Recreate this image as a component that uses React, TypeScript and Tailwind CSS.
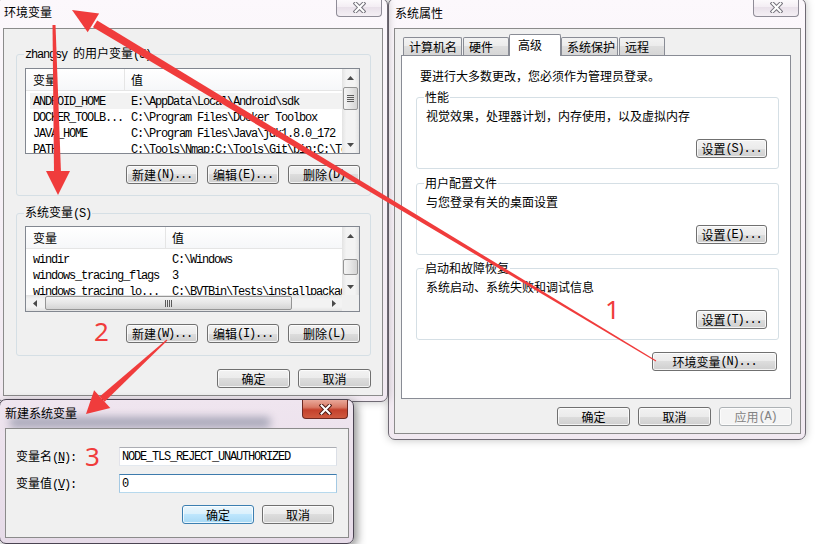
import React from 'react'

type Row = [string, string]

const ASCII = /^[\x20-\x7e]+$/

// SimSun-like mix: CJK at 12px, ASCII in a 6px-wide mono
function T({ s }: { s: string }) {
  const parts = s.split(/([\x20-\x7e]+)/).filter((p) => p !== '')
  return (
    <>
      {parts.map((p, i) =>
        ASCII.test(p) ? (
          <span key={i} className="whitespace-pre font-['Liberation_Mono',monospace] tracking-[-1.2px]">
            {p}
          </span>
        ) : (
          <span key={i}>{p}</span>
        ),
      )}
    </>
  )
}

function Btn({ label, w, kind = 'normal' }: { label: string; w: string; kind?: 'normal' | 'default' | 'disabled' }) {
  const look =
    kind === 'default'
      ? 'border-[#3c7fb1] bg-[linear-gradient(#eaf6fd,#d9f0fc_50%,#bee6fd_50%,#a7d9f5)] text-black'
      : kind === 'disabled'
        ? 'border-[#adb2b5] bg-[#f4f4f4] text-[#838383]'
        : 'border-[#707070] bg-[linear-gradient(#f2f2f2,#ebebeb_50%,#dddddd_50%,#cfcfcf)] text-black'
  return (
    <button
      type="button"
      className={`flex h-[19px] shrink-0 items-center justify-center rounded-[3px] border text-[12px] leading-[14px] shadow-[inset_0_0_0_1px_rgba(255,255,255,0.75)] ${w} ${look}`}
    >
      <T s={label} />
    </button>
  )
}

function CloseBtn({ active, h }: { active?: boolean; h: string }) {
  return (
    <div
      className={`flex w-[46px] shrink-0 items-center justify-center rounded-b-[4px] border border-t-0 ${h} ${
        active
          ? 'border-[#6d2a23] bg-[linear-gradient(#e9a899,#d97a66_40%,#c4412c_55%,#cf5a40)]'
          : 'border-[#8f8c97] bg-[linear-gradient(#fdfbfd,#f3edf3_50%,#e9e1ea_50%,#f4eff4)]'
      }`}
    >
      <svg width="13" height="11" viewBox="0 0 13 11">
        <path d="M2.5 1.5 L10.5 9.5 M10.5 1.5 L2.5 9.5" stroke={active ? '#4e1a14' : '#75737c'} strokeWidth="4" strokeLinecap="square" />
        <path d="M2.5 1.5 L10.5 9.5 M10.5 1.5 L2.5 9.5" stroke="#ffffff" strokeWidth="2" strokeLinecap="square" />
      </svg>
    </div>
  )
}

function Win({
  box,
  bar,
  tp,
  cb,
  title,
  active,
  children,
}: {
  box: string
  bar: string
  tp: string
  cb: string
  title: string
  active?: boolean
  children: React.ReactNode
}) {
  return (
    <div
      className={`absolute flex flex-col rounded-[7px] border ${
        active
          ? 'border-[#4b4452] bg-[linear-gradient(#efe5ef,#e6dbe8)] shadow-[3px_3px_10px_rgba(0,0,0,0.45)]'
          : 'border-[#6f6a74] bg-[linear-gradient(#fcf8fc,#f1e9f1)] shadow-[0_0_8px_rgba(0,0,0,0.25)]'
      } ${box}`}
    >
      <div className={`relative flex shrink-0 items-start justify-between ${bar}`}>
        {active && <div className="absolute left-[10px] top-[17px] h-[11px] w-[260px] bg-[#3c4a66] opacity-40 blur-[4px]" />}
        <div className={`relative text-[12px] leading-[14px] text-black ${tp}`}>{title}</div>
        <CloseBtn active={active} h={cb} />
      </div>
      <div className="relative mb-[5px] ml-[5px] mr-[4px] flex-1 border border-[#8b8b8b] bg-[#f0f0f0]">{children}</div>
    </div>
  )
}

function Group({ legend, cls, children }: { legend: string; cls: string; children: React.ReactNode }) {
  return (
    <fieldset className={`rounded-[3px] border border-[#d5dfe5] ${cls}`}>
      <legend className="-ml-[1px] px-[1px] text-[12px] leading-[14px]">
        <T s={legend} />
      </legend>
      {children}
    </fieldset>
  )
}

function Up() {
  return (
    <svg width="7" height="4" viewBox="0 0 7 4">
      <path d="M0 4 L3.5 0 L7 4Z" fill="#4a4a4a" />
    </svg>
  )
}

function Down() {
  return (
    <svg width="7" height="4" viewBox="0 0 7 4">
      <path d="M0 0 L3.5 4 L7 0Z" fill="#4a4a4a" />
    </svg>
  )
}

function VScroll({ thumb, grip }: { thumb: string; grip?: boolean }) {
  return (
    <div className="flex w-[17px] shrink-0 flex-col bg-[linear-gradient(90deg,#e3e3e3,#f3f3f3_25%,#f3f3f3_75%,#e3e3e3)]">
      <div className="flex h-[17px] shrink-0 items-center justify-center">
        <Up />
      </div>
      <div className="min-h-0 flex-1">
        <div
          className={`mx-[1px] flex flex-col items-center justify-center gap-[1px] rounded-[2px] border border-[#959595] bg-[linear-gradient(90deg,#f4f4f4,#e6e6e6_50%,#d4d4d4)] ${thumb}`}
        >
          {grip && (
            <>
              <div className="h-[1px] w-[7px] bg-[#5a5a5a]" />
              <div className="h-[1px] w-[7px] bg-[#5a5a5a]" />
              <div className="h-[1px] w-[7px] bg-[#5a5a5a]" />
              <div className="h-[1px] w-[7px] bg-[#5a5a5a]" />
            </>
          )}
        </div>
      </div>
      <div className="flex h-[17px] shrink-0 items-center justify-center">
        <Down />
      </div>
    </div>
  )
}

function HScroll() {
  return (
    <div className="flex h-[16px] shrink-0">
      <div className="flex flex-1 bg-[linear-gradient(#e3e3e3,#f3f3f3_25%,#f3f3f3_75%,#e3e3e3)]">
        <div className="flex w-[17px] items-center justify-center">
          <svg width="4" height="7" viewBox="0 0 4 7">
            <path d="M4 0 L0 3.5 L4 7Z" fill="#4a4a4a" />
          </svg>
        </div>
        <div className="flex-1 py-[1px]">
          <div className="ml-[2px] flex h-full w-[247px] items-center justify-center gap-[1px] rounded-[2px] border border-[#959595] bg-[linear-gradient(#f4f4f4,#e6e6e6_50%,#d4d4d4)]">
            <div className="h-[7px] w-[1px] bg-[#5a5a5a]" />
            <div className="h-[7px] w-[1px] bg-[#5a5a5a]" />
            <div className="h-[7px] w-[1px] bg-[#5a5a5a]" />
            <div className="h-[7px] w-[1px] bg-[#5a5a5a]" />
          </div>
        </div>
        <div className="flex w-[17px] items-center justify-center">
          <svg width="4" height="7" viewBox="0 0 4 7">
            <path d="M0 0 L4 3.5 L0 7Z" fill="#4a4a4a" />
          </svg>
        </div>
      </div>
      <div className="w-[17px] bg-[#f0f0f0]" />
    </div>
  )
}

function ListView({
  headW,
  cellW,
  rows,
  hs,
  thumb,
  grip,
  hot,
}: {
  headW: string
  cellW: string
  rows: Row[]
  hs?: boolean
  thumb: string
  grip?: boolean
  hot?: boolean
}) {
  return (
    <div className="flex h-[86px] w-[335px] flex-col border border-[#828790] bg-white">
      <div className="flex min-h-0 flex-1">
        <div className="min-w-0 flex-1 overflow-hidden">
          <div className="flex h-[22px] border-b border-[#e5e5e5] bg-[linear-gradient(#ffffff,#f6f7f9)] text-[12px] leading-[21px]">
            <div className={`shrink-0 border-r border-[#e5e5e5] pl-[7px] ${headW}`}>变量</div>
            <div className="pl-[6px]">值</div>
          </div>
          <div className="pt-[2px]">
            {rows.map(([a, b], i) => (
              <div
                key={i}
                className={`ml-[4px] flex h-[16px] items-center whitespace-nowrap text-[12px] leading-[16px] ${
                  hot && i === 0 ? 'bg-[#f2f2f2]' : ''
                }`}
              >
                <div className={`shrink-0 overflow-hidden pl-[3px] ${cellW}`}>
                  <T s={a} />
                </div>
                <div className="min-w-0 flex-1 overflow-hidden pl-[6px]">
                  <T s={b} />
                </div>
              </div>
            ))}
          </div>
        </div>
        <VScroll thumb={thumb} grip={grip} />
      </div>
      {hs && <HScroll />}
    </div>
  )
}

function PGroup({ mt, legend, text, btn }: { mt: string; legend: string; text: string; btn: string }) {
  return (
    <Group legend={legend} cls={`pl-[8px] pr-[11px] pt-[5px] pb-[10px] ${mt}`}>
      <div className="pl-[1px] leading-[14px]">{text}</div>
      <div className="mt-[16px] flex justify-end">
        <Btn w="w-[71px]" label={btn} />
      </div>
    </Group>
  )
}

function Tab({ label, w, sel }: { label: string; w: string; sel?: boolean }) {
  return sel ? (
    <div
      className={`relative z-10 -mb-[1px] flex h-[22px] shrink-0 items-center rounded-t-[2px] border border-b-0 border-[#898c95] bg-white pb-[2px] pl-[8px] ${w}`}
    >
      {label}
    </div>
  ) : (
    <div
      className={`flex h-[18px] shrink-0 items-center rounded-t-[2px] border border-b-0 border-[#898c95] bg-[linear-gradient(#f3f3f3,#ebebeb_50%,#dedede_50%,#d6d6d6)] pl-[5px] ${w}`}
    >
      {label}
    </div>
  )
}

const userRows: Row[] = [
  ['ANDROID_HOME', 'E:\\AppData\\Local\\Android\\sdk'],
  ['DOCKER_TOOLB...', 'C:\\Program Files\\Docker Toolbox'],
  ['JAVA_HOME', 'C:\\Program Files\\Java\\jdk1.8.0_172'],
  ['PATH', 'C:\\Tools\\Nmap;C:\\Tools\\Git\\bin;C:\\Tools'],
]

const sysRows: Row[] = [
  ['windir', 'C:\\Windows'],
  ['windows_tracing_flags', '3'],
  ['windows_tracing_lo...', 'C:\\BVTBin\\Tests\\installpackage'],
]

export default function App() {
  return (
    <div className="relative h-[544px] w-[817px] overflow-hidden bg-white font-['Noto_Sans_CJK_SC',sans-serif] text-[12px] leading-[14px] text-black">
      {/* 系统属性 */}
      <Win box="left-[388px] top-[-2px] h-[442px] w-[418px]" bar="h-[29px] pl-[6px] pr-[6px]" tp="pt-[7px]" cb="h-[18px]" title="系统属性">
        <div className="flex h-full flex-col">
          <div className="ml-[6px] mr-[9px] mt-[5px] flex flex-col">
            <div className="flex h-[21px] items-end pl-[2px]">
              <Tab w="w-[59px]" label="计算机名" />
              <Tab w="ml-[1px] w-[46px]" label="硬件" />
              <Tab sel w="w-[52px]" label="高级" />
              <Tab w="w-[57px]" label="系统保护" />
              <Tab w="ml-[1px] w-[46px]" label="远程" />
            </div>
            <div className="h-[344px] border border-[#898c95] bg-white">
              <div className="pl-[18px] pt-[13px]">要进行大多数更改，您必须作为管理员登录。</div>
              <div className="ml-[14px] flex w-[363px] flex-col">
                <PGroup mt="mt-[7px]" legend="性能" text="视觉效果，处理器计划，内存使用，以及虚拟内存" btn="设置(S)..." />
                <PGroup mt="mt-[7px]" legend="用户配置文件" text="与您登录有关的桌面设置" btn="设置(E)..." />
                <PGroup mt="mt-[6px]" legend="启动和故障恢复" text="系统启动、系统失败和调试信息" btn="设置(T)..." />
              </div>
              <div className="mt-[12px] flex justify-end pr-[13px]">
                <Btn w="w-[125px]" label="环境变量(N)..." />
              </div>
            </div>
          </div>
          <div className="mt-[8px] flex justify-end gap-[8px] pr-[8px]">
            <Btn w="w-[73px]" label="确定" />
            <Btn w="w-[73px]" label="取消" />
            <Btn w="w-[73px]" label="应用(A)" kind="disabled" />
          </div>
        </div>
      </Win>

      {/* 环境变量 */}
      <Win box="left-[-3px] top-[-2px] h-[404px] w-[391px]" bar="h-[29px] pl-[6px] pr-[5px]" tp="pt-[6px]" cb="h-[18px]" title="环境变量">
        <div className="flex flex-col pl-[12px] pt-[17px]">
          <Group legend="zhangsy 的用户变量(U)" cls="w-[355px] pl-[8px] pr-[10px] pt-[6px] pb-[11px]">
            <ListView headW="w-[99px]" cellW="w-[95px]" rows={userRows} thumb="mt-[1px] h-[23px]" grip hot />
            <div className="mt-[11px] flex justify-end gap-[9px]">
              <Btn w="w-[72px]" label="新建(N)..." />
              <Btn w="w-[72px]" label="编辑(E)..." />
              <Btn w="w-[72px]" label="删除(D)" />
            </div>
          </Group>
          <Group legend="系统变量(S)" cls="mt-[9px] w-[355px] pl-[8px] pr-[10px] pt-[5px] pb-[12px]">
            <ListView headW="w-[140px]" cellW="w-[136px]" rows={sysRows} thumb="mt-[15px] h-[16px]" hs />
            <div className="mt-[12px] flex justify-end gap-[9px]">
              <Btn w="w-[72px]" label="新建(W)..." />
              <Btn w="w-[72px]" label="编辑(I)..." />
              <Btn w="w-[72px]" label="删除(L)" />
            </div>
          </Group>
          <div className="mt-[13px] flex w-[355px] justify-end gap-[8px]">
            <Btn w="w-[73px]" label="确定" />
            <Btn w="w-[73px]" label="取消" />
          </div>
        </div>
      </Win>

      {/* 新建系统变量 */}
      <Win box="left-[-1px] top-[399px] h-[145px] w-[355px]" bar="h-[28px] pl-[5px] pr-[5px]" tp="pt-[6px]" cb="h-[19px]" title="新建系统变量" active>
        <div className="flex flex-col pl-[10px] pr-[11px] pt-[18px]">
          <div className="flex h-[19px] items-center">
            <div className="w-[103px] shrink-0">
              变量名
              <span className="whitespace-pre font-['Liberation_Mono',monospace] tracking-[-1.2px]">
                (<span className="underline">N</span>):
              </span>
            </div>
            <div className="flex h-[19px] w-[218px] items-center border border-[#abadb3] border-b-[#e3e9ef] border-l-[#e2e3ea] border-r-[#dbdfe6] bg-white pl-[2px]">
              <T s="NODE_TLS_REJECT_UNAUTHORIZED" />
            </div>
          </div>
          <div className="mt-[8px] flex h-[19px] items-center">
            <div className="w-[103px] shrink-0">
              变量值
              <span className="whitespace-pre font-['Liberation_Mono',monospace] tracking-[-1.2px]">
                (<span className="underline">V</span>):
              </span>
            </div>
            <div className="flex h-[19px] w-[218px] items-center border border-[#3d7bad] border-b-[#b7d9ed] border-l-[#a4c9e3] border-r-[#a4c9e3] bg-white pl-[2px]">
              <T s="0" />
            </div>
          </div>
          <div className="mt-[12px] flex justify-end gap-[8px] pr-[3px]">
            <Btn w="w-[72px]" label="确定" kind="default" />
            <Btn w="w-[72px]" label="取消" />
          </div>
        </div>
      </Win>

      {/* red annotations */}
      <svg className="pointer-events-none absolute left-0 top-0" width="817" height="544" viewBox="0 0 817 544">
        <g fill="#f03c3c">
          <polygon points="656.3,360.5 97.2,20.5 93.0,27.3 655.7,361.5" />
          <polygon points="72,10 99.1,13.5 87.7,32.3" />
          <polygon points="52.5,25 55.5,25 61,173 54,173" />
          <polygon points="58,195 70,171 46,171" />
          <polygon points="166.6,339.6 167.4,340.4 104.6,401.8 99.8,396.6" />
          <polygon points="86,414 110.3,408.1 94.1,390.3" />
        </g>
      </svg>
      <div className="absolute left-[605px] top-[296px] font-['Noto_Sans',sans-serif] text-[26px] leading-[26px] text-[#f03c3c]">1</div>
      <div className="absolute left-[94px] top-[318px] font-['Noto_Sans',sans-serif] text-[26px] leading-[26px] text-[#f03c3c]">2</div>
      <div className="absolute left-[85px] top-[443px] font-['Noto_Sans',sans-serif] text-[26px] leading-[26px] text-[#f03c3c]">3</div>
    </div>
  )
}
